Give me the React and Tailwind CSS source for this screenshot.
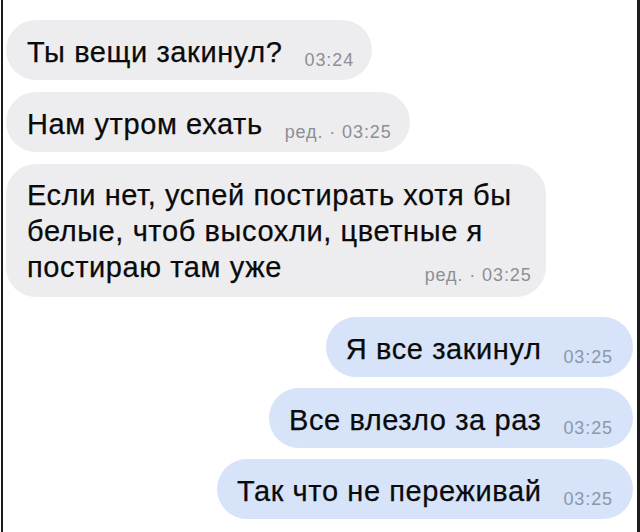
const font = { fontFamily: '"Liberation Sans", Arial, sans-serif' };

const msg = "text-[29px] leading-[36px] tracking-[0.6px] text-[#0a0a0a] [-webkit-text-stroke:0.25px_#0a0a0a]";

function Time({ children, blue }) {
  return (
    <span
      className={`ml-[22px] mb-[1px] shrink-0 text-[18px] leading-none tracking-[0.9px] whitespace-nowrap [-webkit-text-stroke:0px_transparent] ${
        blue ? "text-[#8a98ad]" : "text-[#8e8e93]"
      }`}
    >
      {children}
    </span>
  );
}

function Incoming({ text, time }) {
  return (
    <div className="self-start ml-[3px] flex items-end rounded-[30px] bg-[#ededf0] pl-[21px] pr-[18px] pt-[14px] pb-[10px]">
      <span className={msg}>{text}</span>
      <Time>{time}</Time>
    </div>
  );
}

function Outgoing({ text, time }) {
  return (
    <div className="self-end mr-[4px] flex items-end rounded-[30px] bg-[#d6e3f9] pl-[20px] pr-[20px] pt-[14px] pb-[10px]">
      <span className={msg}>{text}</span>
      <Time blue>{time}</Time>
    </div>
  );
}

export default function App() {
  return (
    <div className="w-[640px] h-[532px] bg-white pl-[1px] overflow-hidden" style={font}>
      <div className="h-full flex flex-col border-l-2 border-r-[3px] border-[#1c1c1c] pt-[20px]">
        <div className="flex flex-col gap-[12px]">
          <Incoming text="Ты вещи закинул?" time="03:24" />
          <Incoming text="Нам утром ехать" time="ред. · 03:25" />

          {/* длинное сообщение в три строки */}
          <div className="self-start ml-[3px] rounded-[30px] bg-[#ededf0] pl-[21px] pr-[14px] pt-[13px] pb-[12px]">
            <div className={`pr-[20px] ${msg}`}>Если нет, успей постирать хотя бы</div>
            <div className={`pr-[20px] ${msg}`}>белые, чтоб высохли, цветные я</div>
            <div className="flex items-end justify-between">
              <span className={msg}>постираю там уже</span>
              <Time>ред. · 03:25</Time>
            </div>
          </div>
        </div>

        <div className="mt-[20px] flex flex-col gap-[11px]">
          <Outgoing text="Я все закинул" time="03:25" />
          <Outgoing text="Все влезло за раз" time="03:25" />
          <Outgoing text="Так что не переживай" time="03:25" />
        </div>
      </div>
    </div>
  );
}
